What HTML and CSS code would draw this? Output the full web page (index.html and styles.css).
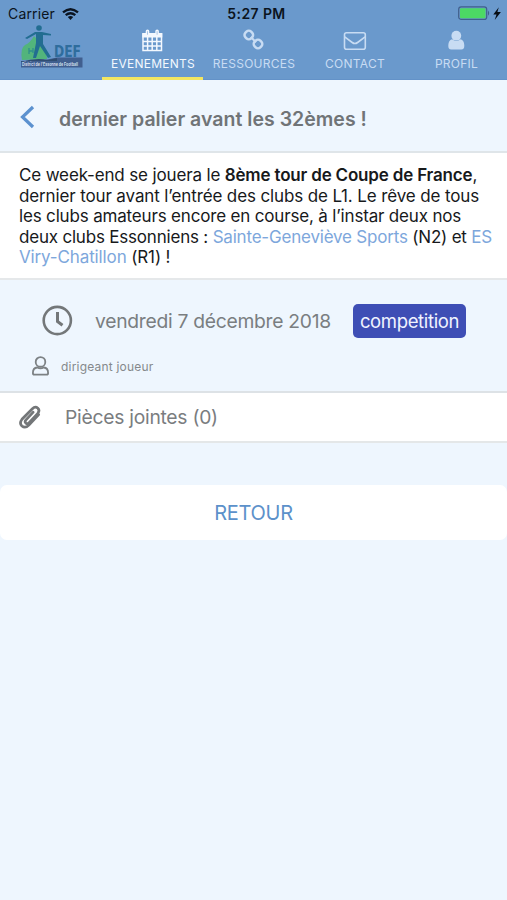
FILE: index.html
```html
<!DOCTYPE html>
<html lang="fr">
<head>
<meta charset="utf-8">
<title>Evenements</title>
<link rel="stylesheet" href="styles.css">
</head>
<body>
<header class="header">
  <div class="status">
    <div class="status-left">
      <span class="carrier">Carrier</span>
      <svg class="wifi" width="17" height="12" viewBox="0 0 17 12" fill="none" stroke="#0b1420" stroke-width="2.3"><path d="M1 4.4Q8.5-2 16 4.4M3.7 7.2Q8.5 3.2 13.3 7.2"/><path d="M5.8 9.1Q8.500 7 11.200 9.100L8.500 12Z" fill="#0b1420" stroke="none"/></svg>
    </div>
    <span class="clock">5:27 PM</span>
    <svg class="battery" width="44" height="15" viewBox="0 0 44 15"><rect x=".7" y=".9" width="28" height="12.500" rx="2.500" fill="none" stroke="#405f8b" stroke-width="1.200"/><rect x="2" y="2.200" width="25.500" height="10" rx="1" fill="#4cd964"/><path d="M30 4.600q2.400 2.600 0 5.200z" fill="#405f8b"/><path d="M40.800 1.300 35.300 8.500h3.200l-1.800 5.500 6.200-7.900h-3.500z" fill="#080d14"/></svg>
  </div>
  <nav class="tabs">
    <div class="logo">
      <svg width="68" height="48" viewBox="0 0 68 48">
        <path d="M13 12 18 17 25 26 26 35 1 36Q-1 24 4 21 9 19 13 12Z" fill="#52b47c"/>
        <path d="M8 24v6M12 24v5M8 27h4" stroke="#2f8f8b" stroke-width="1.300"/>
        <path d="M0 37 24 36 36 33.500 61.500 33.500 61.500 43.500H0z" fill="#405f8f"/>
        <circle cx="18" cy="4" r="2.800" fill="#226d91"/>
        <path d="M14 8h7l9 2v1.500l-8-.5v9l8 13-3 1-8-12-4 12h-3l3-15v-9l-9 5-2-1z" fill="#226d91"/>
        <path d="M0 38q15-5 27-2l9-2v3H0z" fill="#304d71"/>
        <text x="33" y="32.500" class="logo-name" textLength="27" lengthAdjust="spacingAndGlyphs">DEF</text>
        <text x="1" y="41.800" class="logo-sub" textLength="56" lengthAdjust="spacingAndGlyphs">District de l'Essonne de Football</text>
      </svg>
    </div>
    <a class="tab active">
      <svg width="24" height="24" viewBox="0 0 24 24"><path d="M2 6h18.500v16.500H2zM2 13.400h18.500M2 17.900h18.500M6.600 9v13M11.200 9v13M15.800 9v13" fill="none" stroke="currentColor" stroke-width="1.500"/><path d="M1.300 5h20v4.500h-20z" fill="currentColor"/><path d="M6.500 3.200v4M16.100 3.200v4" stroke="currentColor" stroke-width="3.600" stroke-linecap="round"/><path d="M6.500 3.200v3.500M16.100 3.200v3.500" stroke="#a9c5e5" stroke-width="1"/></svg>
      <span class="t1">EVENEMENTS</span>
    </a>
    <a class="tab">
      <svg width="24" height="24" viewBox="0 0 24 24" fill="none" stroke="currentColor" stroke-width="2.500"><rect x="2.800" y="3" width="8" height="8" rx="3.300" transform="rotate(45 6.800 7)"/><rect x="12" y="12" width="8" height="8" rx="3.300" transform="rotate(45 16 16)"/><path d="m8.800 9 5.200 5.200" stroke-width="2.200"/></svg>
      <span class="t2">RESSOURCES</span>
    </a>
    <a class="tab">
      <svg width="24" height="24" viewBox="0 0 24 24" fill="none" stroke="currentColor" stroke-width="1.600"><rect x="1.500" y="4.800" width="20.800" height="16.400" rx="2"/><path d="M1.700 8.800 9.200 14.500q2.700 2 5.400 0l7.500-5.700"/></svg>
      <span class="t3">CONTACT</span>
    </a>
    <a class="tab">
      <svg width="24" height="24" viewBox="0 0 24 24" fill="currentColor"><circle cx="12.300" cy="7.700" r="4.900"/><path d="M8 11.200q4.300 3.500 8.600 0 3.500.8 3.700 6 .2 4.300-3 4.300h-10q-3.200 0-3-4.300.2-5.200 3.700-6z"/></svg>
      <span class="t4">PROFIL</span>
    </a>
  </nav>
</header>
<main>
  <div class="title-row">
    <svg width="17" height="24" viewBox="0 0 17 24"><path d="M15 2 4.500 12 15 22" fill="none" stroke="#5b91cf" stroke-width="3.200"/></svg>
    <h1>dernier palier avant les 32èmes !</h1>
  </div>
  <article class="body">
    <div class="l1">Ce week-end se jouera le <b>8ème tour de Coupe de France</b>,</div>
    <div class="l2">dernier tour avant l’entrée des clubs de L1. Le rêve de tous</div>
    <div class="l3">les clubs amateurs encore en course, à l’instar deux nos</div>
    <div class="l4">deux clubs Essonniens : <a>Sainte-Geneviève Sports</a> (N2) et <a>ES</a></div>
    <div class="l5"><a>Viry-Chatillon</a> (R1) !</div>
  </article>
  <section class="info">
    <div class="date-row">
      <svg width="32" height="32" viewBox="0 0 32 32" fill="none" stroke="#737779"><circle cx="16.300" cy="15.500" r="13.600" stroke-width="2.600"/><path d="M16.500 7v9.500l5 3.800" stroke-width="3"/></svg>
      <span class="date">vendredi 7 décembre 2018</span>
      <span class="tag">competition</span>
    </div>
    <div class="people-row">
      <svg width="18" height="20" viewBox="0 0 18 20" fill="none" stroke="#7c8184" stroke-width="1.800"><circle cx="9.500" cy="5.900" r="4.800"/><path d="M6.200 11.500q-4.300.4-4.300 5.400 0 1.700 1.500 1.700h12.200q1.500 0 1.500-1.700 0-5-4.300-5.400-3.300 1.500-6.600 0z"/></svg>
      <span class="people">dirigeant joueur</span>
    </div>
  </section>
  <section class="files">
    <svg width="24" height="26" viewBox="0 0 24 26" fill="none" stroke="#737678" stroke-width="2.700" stroke-linecap="round"><path d="m15.200 8.200-7.400 8q-1.400 1.800.1 3 1.500 1.200 3-.4l8.900-9.500q2.300-3 .1-5.100-2.700-2.300-5.500.5L4 15.200q-3 4-.1 6.800 3.300 2.800 7-.9l9.800-10.600"/></svg>
    <span class="files-label">Pièces jointes (0)</span>
  </section>
  <button class="back"><span>RETOUR</span></button>
</main>
</body>
</html>
```
FILE: styles.css
```css
* { box-sizing: border-box; }
body { margin: 0; height: 900px; background: #eef6fe; font-family: Inter, "Liberation Sans", sans-serif; color: #17191b; overflow: hidden; }
svg { display: block; flex: none; overflow: visible; }
.header { height: 80px; background: #6a99cc; border-bottom: 1px solid #6392c8; }
.status { height: 27px; display: grid; grid-template-columns: 1fr auto 1fr; align-items: center; padding: 0 5px 0 8px; color: #0b1420; }
.status-left { display: flex; gap: 7px; align-items: center; }
.carrier { font-size: 14px; letter-spacing: .15px; }
.clock { font-size: 14px; font-weight: 600; letter-spacing: .4px; padding-left: 3px; }
.battery { justify-self: end; }
.tabs { display: grid; grid-template-columns: 102px 101px 101px 101px 102px; height: 53px; }
.logo { padding: 0 0 0 21px; margin-top: -3px; }
.logo-name { font: 700 16px "DejaVu Sans", sans-serif; fill: #2f6d9d; }
.logo-sub { font: 700 5px Inter, sans-serif; fill: #d2dfed; }
.tab { display: flex; flex-direction: column; align-items: center; padding-top: 1px; color: #c8dcf3; border-bottom: 3px solid transparent; }
.tab span { font-size: 12px; line-height: 14px; margin-top: 5px; letter-spacing: .25px; padding-left: 1px; white-space: nowrap; }
.tab.active { color: #f3f8fe; border-bottom-color: #f3e660; }
.title-row { height: 73px; border-bottom: 2px solid #dfe5e9; display: flex; align-items: center; padding: 2px 0 0 18px; }
h1 { margin: 4px 0 0 24px; font-size: 19.5px; font-weight: 600; line-height: 24px; color: #707477; white-space: nowrap; letter-spacing: .02px; }
.body { height: 127px; padding: 12px 0 0 19px; background: #fff; border-bottom: 2px solid #e5e8ea; font-size: 17px; line-height: 20.5px; white-space: nowrap; letter-spacing: -.15px; }
.l2 { letter-spacing: -.13px; }
.l3 { letter-spacing: -.17px; }
.l4 { letter-spacing: -.2px; }
.l5 { letter-spacing: -.13px; }
.body b { font-weight: 600; letter-spacing: -.18px; }
.body a { color: #7da7dc; }
.info { height: 113px; border-bottom: 2px solid #dde2e6; padding: 24px 0 0 31px; }
.date-row { display: flex; align-items: center; height: 34px; padding-left: 10px; }
.date { width: 237px; margin-left: 22px; font-size: 19.3px; color: #7a7e81; white-space: nowrap; letter-spacing: -.28px; }
.tag { width: 113px; height: 34px; margin-left: 21px; border-radius: 5px; background: #3e4eb5; color: #f0f3ff; text-align: center; font-size: 18.5px; line-height: 35px; letter-spacing: -.35px; }
.people-row { display: flex; align-items: center; margin-top: 18px; height: 20px; }
.people { margin: 0 0 0 12px; font-size: 12px; color: #85898c; letter-spacing: .2px; }
.files { height: 50px; background: #fff; border-bottom: 2px solid #e4e7e8; display: flex; align-items: center; padding-left: 18px; }
.files-label { margin-left: 23px; font-size: 19.3px; color: #7a7d7f; letter-spacing: -.26px; }
.back { display: block; width: 100%; height: 55px; margin-top: 42px; padding: 0; border: 0; border-radius: 7px; background: #fff; color: #5c91ca; font: 400 20px Inter, sans-serif; letter-spacing: -.3px; }
```
